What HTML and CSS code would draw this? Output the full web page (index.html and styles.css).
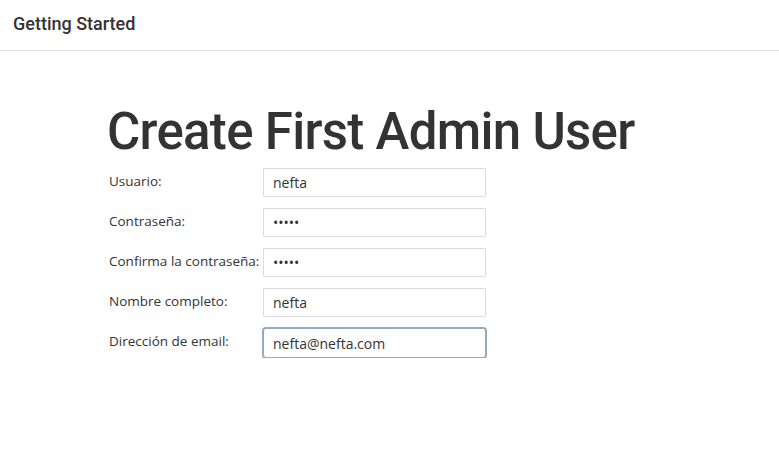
FILE: index.html
```html
<!DOCTYPE html>
<html lang="es">
<head>
<meta charset="utf-8">
<title>Getting Started</title>
<link rel="stylesheet" href="styles.css">
</head>
<body>
<header class="topbar">
  <div class="topbar-title">Getting Started</div>
</header>
<main class="content">
  <h1 class="page-title">Create First Admin User</h1>
  <form class="admin-form">
    <label class="field-label" for="u">Usuario:</label>
    <input class="field-input" id="u" type="text" value="nefta">
    <label class="field-label" for="p1">Contraseña:</label>
    <input class="field-input" id="p1" type="password" value="nefta">
    <label class="field-label" for="p2">Confirma la contraseña:</label>
    <input class="field-input" id="p2" type="password" value="nefta">
    <label class="field-label" for="n">Nombre completo:</label>
    <input class="field-input" id="n" type="text" value="nefta">
    <label class="field-label" for="e">Dirección de email:</label>
    <input class="field-input is-focused" id="e" type="text" value="nefta@nefta.com">
  </form>
</main>
</body>
</html>
```
FILE: styles.css
```css
html, body {
  margin: 0;
  padding: 0;
  background: #fff;
}
body {
  font-family: "Open Sans", "Noto Sans", sans-serif;
  color: #333;
}
.topbar {
  height: 50px;
  border-bottom: 1px solid #e5e5e5;
  display: flex;
  align-items: center;
  padding-left: 13px;
}
.topbar-title {
  font-family: Roboto, sans-serif;
  font-weight: 500;
  font-size: 18px;
  color: #333;
  padding-bottom: 4px;
}
.content {
  padding-left: 107px;
}
.page-title {
  font-family: Roboto, sans-serif;
  font-weight: 500;
  font-size: 51px;
  letter-spacing: -0.7px;
  line-height: 60px;
  margin: 51px 0 0 0;
  color: #333;
}
.admin-form {
  display: grid;
  grid-template-columns: 154px 223px;
  row-gap: 11px;
  margin-top: 6px;
  margin-left: 2px;
}
.field-label {
  font-size: 13.5px;
  padding-top: 4px;
  color: #333;
}
.field-input {
  box-sizing: border-box;
  height: 29px;
  width: 223px;
  border: 1px solid #dcdcdc;
  border-radius: 1px;
  padding: 0 9px;
  font-family: "Open Sans", sans-serif;
  font-size: 14px;
  color: #333;
  background: #fff;
  outline: none;
}
.is-focused {
  height: 30px;
  border: 1px solid #8eacc8;
  border-radius: 3px;
  box-shadow: 0 0 0 1px #8eacc8;
}
```
